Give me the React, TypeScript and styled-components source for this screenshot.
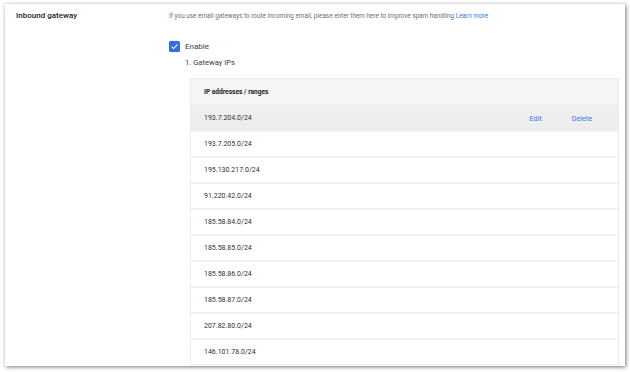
import * as React from 'react'
import styled, { createGlobalStyle } from 'styled-components'

const GlobalStyle = createGlobalStyle`
    html, body {
        margin: 0;
        padding: 0;
        background: #ffffff;
        font-family: Roboto, 'Liberation Sans', Arial, sans-serif;
    }
`

const ipRanges = [
    '193.7.204.0/24',
    '193.7.205.0/24',
    '195.130.217.0/24',
    '91.220.42.0/24',
    '185.58.84.0/24',
    '185.58.85.0/24',
    '185.58.86.0/24',
    '185.58.87.0/24',
    '207.82.80.0/24',
    '146.101.78.0/24',
]

const Page = styled.div`
    width: 630px;
    height: 372px;
    padding: 4px 0 0 5px;
    box-sizing: border-box;
    overflow: hidden;
`

const Card = styled.div`
    width: 620px;
    height: 362px;
    background: #ffffff;
    box-shadow: 1px 1px 4px rgba(0, 0, 0, 0.55);
    display: grid;
    grid-template-columns: 164px 1fr;
    overflow: hidden;
`

const SettingLabel = styled.div`
    padding: 7px 0 0 11px;
    font-size: 8px;
    font-weight: 500;
    color: #202124;
    line-height: 10px;
`

const SettingBody = styled.div`
    padding-top: 7px;
    display: flex;
    flex-direction: column;
    padding-right: 6px;
`

const Description = styled.div`
    font-size: 6.4px;
    line-height: 10px;
    color: #6f6f6f;
    white-space: nowrap;

    a {
        color: #3b78e7;
        text-decoration: none;
    }
`

const CheckRow = styled.label`
    display: flex;
    align-items: center;
    gap: 5px;
    margin-top: 19px;
    height: 12px;
    font-size: 8px;
    color: #3c4043;
`

const CheckBox = styled.span`
    width: 11px;
    height: 11px;
    border-radius: 1.5px;
    background: #2f6fe0;
    display: flex;
    align-items: center;
    justify-content: center;
`

const SubHeading = styled.div`
    margin: 6px 0 0 16px;
    font-size: 7.6px;
    line-height: 10px;
    color: #3c4043;
`

const Table = styled.div`
    margin: 10px 0 0 21px;
    border: 1px solid #ececec;
    display: flex;
    flex-direction: column;
`

const HeaderRow = styled.div`
    height: 25px;
    background: #f5f5f5;
    display: flex;
    align-items: center;
    padding-left: 13px;
    font-size: 6.6px;
    font-weight: 700;
    color: #202124;
`

const Row = styled.div<{ $active?: boolean }>`
    height: 24px;
    border-top: 2px solid #f1f1f1;
    background: ${props => (props.$active ? '#eeeeee' : '#ffffff')};
    display: flex;
    align-items: center;
    padding-left: 13px;
    font-size: 7px;
    color: #303030;
`

const Address = styled.span`
    flex: 1;
`

const Actions = styled.div`
    display: flex;
    gap: 30px;
    padding-right: 26px;
    font-size: 7.2px;
    color: #3b78e7;
`

const App: React.FunctionComponent = () => {
    return (
        <Page>
            <GlobalStyle />
            <Card>
                <SettingLabel>Inbound gateway</SettingLabel>
                <SettingBody>
                    <Description>
                        If you use email gateways to route incoming email,
                        please enter them here to improve spam handling{' '}
                        <a href="#">Learn more</a>
                    </Description>
                    <CheckRow>
                        <CheckBox>
                            <svg width="9" height="9" viewBox="0 0 24 24">
                                <path
                                    d="M4.5 12.5l5 5 10-10.5"
                                    fill="none"
                                    stroke="#ffffff"
                                    strokeWidth="3"
                                />
                            </svg>
                        </CheckBox>
                        Enable
                    </CheckRow>
                    <SubHeading>1. Gateway IPs</SubHeading>
                    <Table>
                        <HeaderRow>IP addresses / ranges</HeaderRow>
                        {ipRanges.map((ip, i) => (
                            <Row key={ip} $active={i === 0}>
                                <Address>{ip}</Address>
                                {i === 0 && (
                                    <Actions>
                                        <span>Edit</span>
                                        <span>Delete</span>
                                    </Actions>
                                )}
                            </Row>
                        ))}
                    </Table>
                </SettingBody>
            </Card>
        </Page>
    )
}

export default App
